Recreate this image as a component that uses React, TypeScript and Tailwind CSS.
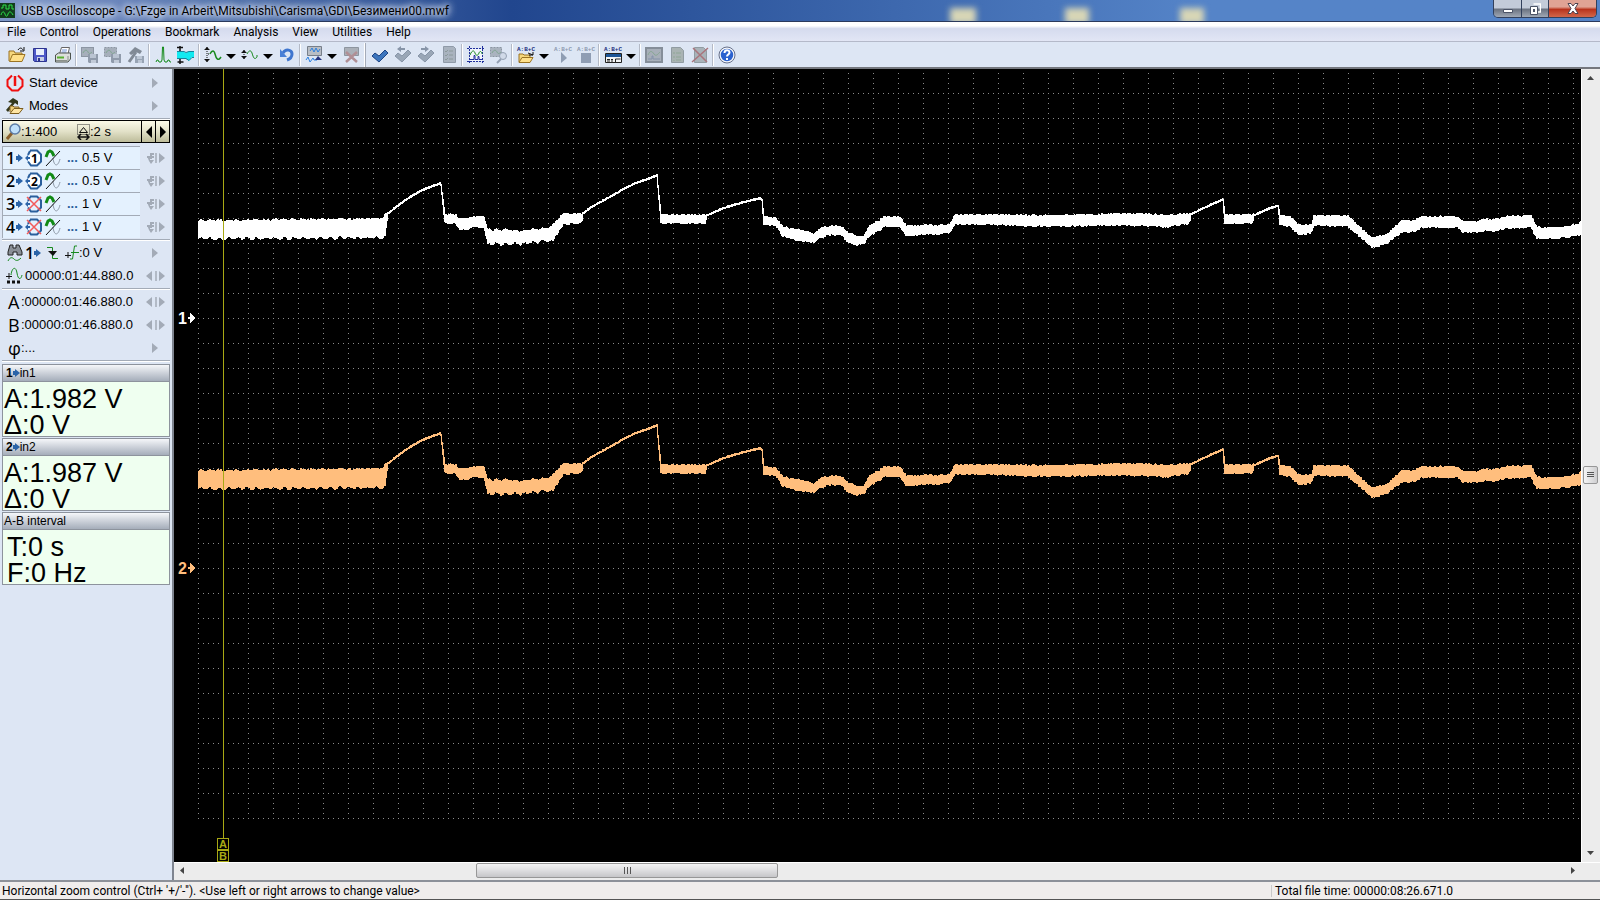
import type { ReactNode } from "react";

// Wave envelope: x, top, bottom (window coordinates)
const envelope: [number, number, number][] = [
  [198, 221, 236], [383, 219, 235], [385, 214, 233], [388, 212, 213], [392, 209, 210],
  [397, 205, 206], [405, 199, 200], [413, 194, 195], [420, 190, 191], [427, 187, 188],
  [440, 182, 183], [441, 183, 185], [445, 215, 221],
  [456, 215, 221], [459, 219, 227], [469, 219, 227], [473, 217, 225], [484, 217, 225],
  [488, 230, 241], [523, 231, 241], [550, 228, 238], [553, 225, 238], [563, 214, 222],
  [582, 214, 220], [583, 212, 213], [591, 206, 207], [600, 201, 202], [611, 195, 196],
  [623, 188, 189], [635, 182, 183], [647, 178, 179],
  [657, 174, 175], [661, 215, 221], [705, 215, 221], [707, 214, 215], [723, 207, 208],
  [743, 201, 202], [760, 197, 198], [762, 198, 200], [764, 217, 222], [776, 218, 223],
  [783, 227, 234], [798, 230, 238], [813, 234, 240], [822, 228, 235], [832, 226, 232],
  [842, 227, 233], [847, 232, 239], [856, 237, 243], [864, 236, 241], [870, 226, 233],
  [880, 220, 228], [884, 217, 224], [900, 217, 224], [906, 226, 233], [950, 225, 231],
  [955, 215, 222], [993, 215, 222], [1050, 216, 224], [1093, 215, 223], [1143, 214, 223],
  [1167, 216, 225], [1173, 215, 223], [1189, 214, 221], [1191, 213, 214], [1203, 207, 208],
  [1223, 198, 199], [1225, 215, 221], [1252, 215, 221], [1254, 214, 215], [1265, 209, 210],
  [1278, 204, 205], [1280, 216, 222], [1290, 217, 224], [1297, 224, 231], [1303, 226, 232],
  [1312, 224, 230], [1314, 216, 223], [1348, 216, 224], [1357, 225, 232], [1372, 238, 245],
  [1386, 235, 242], [1393, 229, 236], [1402, 221, 230], [1413, 221, 229], [1423, 217, 225],
  [1458, 217, 225], [1463, 222, 230], [1478, 222, 230], [1485, 219, 228], [1493, 220, 229],
  [1505, 217, 226], [1531, 216, 225], [1537, 228, 236], [1557, 228, 236], [1577, 225, 233],
  [1580, 223, 233],
];

function noise(x: number) {
  const n = Math.sin(x * 127.1) * 43758.5453;
  return n - Math.floor(n);
}

function wavePath() {
  const upper: string[] = [];
  const lower: string[] = [];
  let i = 0;
  for (let x = 198; x <= 1580; x++) {
    while (i < envelope.length - 2 && x > envelope[i + 1][0]) i++;
    const [x0, t0, b0] = envelope[i];
    const [x1, t1, b1] = envelope[i + 1];
    const k = (x - x0) / (x1 - x0);
    const top = t0 + (t1 - t0) * k;
    const bottom = b0 + (b1 - b0) * k;
    const thick = bottom - top > 3;
    const ripple = x < 384 || (x > 488 && x < 552) ? Math.sin(x * 0.68) * 1.3 : 0;
    const amp = thick ? 2.2 : 0.8;
    upper.push(`${x} ${(top + 1 - noise(x) * amp + ripple * 0.5).toFixed(1)}`);
    lower.push(`${x} ${(bottom + 1 + (thick ? noise(x + 5000) * amp : 0) + ripple).toFixed(1)}`);
  }
  return `M${upper.join("L")}L${lower.reverse().join("L")}Z`;
}

const wave = wavePath();

const menus = ["File", "Control", "Operations", "Bookmark", "Analysis", "View", "Utilities", "Help"];

function Icon({ children, size = 20 }: { children: ReactNode; size?: number }) {
  return (
    <svg width={size} height={size} viewBox={`0 0 ${size} ${size}`} fill="none" className="shrink-0">
      {children}
    </svg>
  );
}

function Folder() {
  return (
    <>
      <path d="M2 16V6h5l1 2h7v2" fill="#f6d77c" stroke="#9a7322" />
      <path d="M2.500 16.500l3-7H18l-3 7z" fill="#ffe08a" stroke="#9a7322" />
      <path d="M11 5c2-3 4-2 5 0m1-3v4h-4" stroke="#111" />
    </>
  );
}

function GreyWave({ dashed }: { dashed?: boolean }) {
  return (
    <>
      <rect x="1.500" y="2.500" width="12" height="9" fill="#a6afbb" stroke="#8c96a3" strokeDasharray={dashed ? "2 1" : undefined} />
      <path d="M3 8c2-4 4-3 5-1s2 2 4 0" stroke="#7fa690" />
      <path d="M8 9h10v9H9l-1-1z" fill="#909bab" />
      <path d="M10 9h6v4h-6z" fill="#bac4d2" />
      <path d="M11 15h5v3h-5z" fill="#c2cbd8" />
    </>
  );
}

function Check({ color, edge }: { color: string; edge: string }) {
  return <path d="M2 11l3-3 4 3 6-6 3 3-9 9z" fill={color} stroke={edge} strokeLinejoin="round" />;
}

function Formula({ color }: { color: string }) {
  return (
    <text x="1" y="6" fill={color} className="font-['Liberation_Mono',monospace] text-[6px] font-bold">
      A:B+C
    </text>
  );
}

function Updown({ x = 3, top = 3, bottom = 17 }: { x?: number; top?: number; bottom?: number }) {
  return (
    <>
      <path d={`M${x} ${top}v${bottom - top}`} stroke="#111" strokeDasharray="1 1" />
      <path d={`M${x - 3} ${top + 3}l3-3 3 3zM${x - 3} ${bottom - 3}l3 3 3-3z`} fill="#111" />
    </>
  );
}

type Tool = { label: string; icon?: ReactNode; kind?: "sep" | "grip" | "caret" };
const sep: Tool = { label: "", kind: "sep" };

const tools: Tool[] = [
  { label: "Open file", icon: <Folder /> },
  {
    label: "Save",
    icon: (
      <>
        <path d="M3.500 3.500h13v13h-12l-1-1z" fill="#4d58c8" stroke="#2c348f" />
        <path d="M6 4h8v6H6z" fill="#e8effc" />
        <path d="M7 12h7v4H7z" fill="#c8cfe4" />
        <path d="M8 13h2v3H8z" fill="#2c348f" />
      </>
    ),
  },
  {
    label: "Print",
    icon: (
      <>
        <path d="M6.500 9l2-6.500h8L15 9z" fill="#fff" stroke="#666" />
        <path d="M9 5h5M8.500 7h5" stroke="#6f92d8" />
        <path d="M2.500 10l3-2H17.500v6l-2.500 3h-12.500z" fill="#dcdfdc" stroke="#4c534c" />
        <path d="M4 12.500h7" stroke="#58b030" strokeWidth="2" />
        <path d="M3 15.500h11M15 11v5" stroke="#8b918b" />
      </>
    ),
  },
  sep,
  { label: "Save fragment", icon: <GreyWave /> },
  { label: "Save selection", icon: <GreyWave dashed /> },
  {
    label: "Tools",
    icon: (
      <>
        <path d="M3 8l6-6 7 4-2 3-4-2-5 3z" fill="#818a96" />
        <path d="M10 7L3 17" stroke="#818a96" strokeWidth="3" />
        <path d="M9 11h9v7H9z" fill="#98a4b4" />
        <path d="M11 11h5v3h-5zM12 15h4v3h-4z" fill="#bdc7d5" />
      </>
    ),
  },
  sep,
  {
    label: "Spectrum",
    icon: <path d="M3 17l1-2h1l1 2h2l1-2 .5-13h1l.5 13 1 2h2l1-2h1l1 2h1" stroke="#138a1a" />,
  },
  {
    label: "Envelope",
    icon: (
      <>
        <path d="M1 7h7l2 1 3-2h5v6h-2l-3 4-3-2H1z" fill="#12eaf0" />
        <path d="M1 6.500h7l2 1 3-1h5M1 13.500h9l3 2 3-3h2" stroke="#18839a" />
        <path d="M1 2.500h6M4 1v5M1.500 17h6M4 14v5" stroke="#111" strokeWidth="1.500" />
      </>
    ),
  },
  sep,
  {
    label: "Vertical scale",
    icon: (
      <>
        <Updown x={4} top={2} bottom={17} />
        <path d="M5 9h1" stroke="#111" />
        <path d="M7 9c2-4 4-4 5 0s3 8 6 3" stroke="#188a1e" strokeWidth="1.500" />
      </>
    ),
  },
  { label: "Vertical scale list", kind: "caret" },
  {
    label: "Vertical offset",
    icon: (
      <>
        <Updown x={4} top={5} bottom={14} />
        <path d="M7 9c2-4 4-4 5-1s2 8 5 4v-2" stroke="#188a1e" />
      </>
    ),
  },
  { label: "Vertical offset list", kind: "caret" },
  {
    label: "Undo",
    icon: (
      <>
        <path d="M6 8c3-5 9-3 9 1 0 3-2 5-5 6" stroke="#3f76cf" strokeWidth="3" />
        <path d="M3 4v8h7z" fill="#4a80d6" />
      </>
    ),
  },
  sep,
  {
    label: "Bookmark wave",
    icon: (
      <>
        <path d="M3.500 1.500h14v9h-14z" fill="#b9bec5" stroke="#777f8a" />
        <path d="M6 6l2-3 2 4 2-4 2 4 2-3" stroke="#2a7fe0" />
        <path d="M2 15l2-3 2 5 3-4 1 2h3" stroke="#2a7fe0" />
        <path d="M11 15l3-4 4 4z" fill="#27357f" />
      </>
    ),
  },
  { label: "Bookmark wave list", kind: "caret" },
  {
    label: "Delete bookmark",
    icon: (
      <>
        <path d="M3.500 2.500h14v8h-14z" fill="#aab0b8" stroke="#8d959f" />
        <path d="M5 17L16 7M5 7l11 10" stroke="#b08f95" strokeWidth="2.500" />
      </>
    ),
  },
  { label: "", kind: "grip" },
  { label: "Mark", icon: <Check color="#3c75bd" edge="#1d4484" /> },
  {
    label: "Previous mark",
    icon: (
      <>
        <Check color="#99a6b6" edge="#8795a8" />
        <path d="M4 4l4-3v2h4v2H8v2z" fill="#8795a8" />
      </>
    ),
  },
  {
    label: "Next mark",
    icon: (
      <>
        <Check color="#99a6b6" edge="#8795a8" />
        <path d="M13 4L9 1v2H5v2h4v2z" fill="#8795a8" />
      </>
    ),
  },
  {
    label: "Mark list",
    icon: (
      <>
        <path d="M4.500 1.500h10l2 2v14h-12z" fill="#a9b3bf" stroke="#8f9aa8" />
        <path d="M6 6l1 1 2-2M6 10l1 1 2-2M6 14l1 1 2-2M10 6h4M10 10h4M10 14h4" stroke="#8c9a9c" />
      </>
    ),
  },
  sep,
  {
    label: "Select fragment",
    icon: (
      <>
        <path d="M4 4h12v12H4z" fill="#f2f6fd" />
        <path d="M1 3.500h18M1 16.500h18M3.500 1v18M16.500 1v18" stroke="#1f2f9c" strokeDasharray="2 1" />
        <path d="M4 10c2-5 4-5 5-2s3 3 4 0 3-1 3 1" stroke="#188a1e" />
        <path d="M4 14.500h4v-4h1v4h3v-3h1v3h3" stroke="#1f2f9c" />
      </>
    ),
  },
  {
    label: "Zoom fragment",
    icon: (
      <>
        <rect x="1.500" y="2.500" width="11" height="9" fill="#aab3bf" stroke="#8c96a3" strokeDasharray="2 1" />
        <path d="M3 8c2-4 4-3 5-1s2 2 4 0" stroke="#7fa690" />
        <circle cx="14" cy="11" r="3.500" fill="#d1dae8" stroke="#94a0b2" />
        <path d="M12 14l-4 4" stroke="#94a0b2" strokeWidth="2" />
      </>
    ),
  },
  sep,
  {
    label: "Open script",
    icon: (
      <>
        <Formula color="#1c2f7d" />
        <path d="M3 17V9h4l1 1h6v2" fill="#f6d77c" stroke="#9a7322" />
        <path d="M3 17.500l3-5h11l-3 5z" fill="#ffe08a" stroke="#9a7322" />
        <path d="M12 8l5 2m0-3v3h-4" stroke="#111" />
      </>
    ),
  },
  { label: "Script list", kind: "caret" },
  {
    label: "Run script",
    icon: (
      <>
        <Formula color="#8d9ab0" />
        <path d="M8 7l6 6-6 5z" fill="#8f9db3" />
      </>
    ),
  },
  {
    label: "Stop script",
    icon: (
      <>
        <Formula color="#8d9ab0" />
        <path d="M5 8h10v10H5z" fill="#8f9db3" />
      </>
    ),
  },
  sep,
  {
    label: "Script panel",
    icon: (
      <>
        <Formula color="#1c2f7d" />
        <path d="M2.500 8.500h16v9h-16z" fill="#f3f5f7" stroke="#222" />
        <path d="M3 9h15v3H3z" fill="#1d5597" />
        <path d="M4 14.500h3m1 0h2M4 16h3m1 0h2M12.500 17v-3h5" stroke="#222" />
      </>
    ),
  },
  { label: "Script panel list", kind: "caret" },
  sep,
  {
    label: "Report picture",
    icon: (
      <>
        <path d="M2 3h16v14H2z" fill="#a7afb9" stroke="#858e99" strokeWidth="2" />
        <path d="M4 10c2-5 4-4 6-1s4 0 6-2" stroke="#87a793" />
        <path d="M4 14h4v-3h1v3h7" stroke="#8593ab" />
      </>
    ),
  },
  {
    label: "Report page",
    icon: (
      <>
        <path d="M4.500 2.500h9l3 3v12h-12z" fill="#a9b3b3" stroke="#919ca2" />
        <path d="M7 7v2M7 11v2M7 15v1M9 8h5M9 12h5M9 15h5" stroke="#8fa796" />
      </>
    ),
  },
  {
    label: "Delete report",
    icon: (
      <>
        <path d="M4.500 2.500h9l3 3v12h-12z" fill="#a9b3b9" stroke="#919ca2" />
        <path d="M2 17L18 3M3 3l14 14" stroke="#a9747c" strokeWidth="1.500" />
      </>
    ),
  },
  sep,
  {
    label: "Help",
    icon: (
      <>
        <circle cx="10" cy="10" r="7" fill="#2b62cf" stroke="#f5f7fb" strokeWidth="1.500" />
        <circle cx="10" cy="10" r="8" stroke="#66708a" />
        <path d="M7.500 8c0-3.500 5-3.500 5-.5 0 2-2.500 2-2.500 4" stroke="#fff" strokeWidth="2" />
        <path d="M9 13h2v2H9z" fill="#fff" />
      </>
    ),
  },
];

function Toolbar() {
  return (
    <div className="flex h-[25px] shrink-0 items-center overflow-hidden bg-[#dde6f4] pl-[5px]">
      {tools.map((tool, i) => {
        if (tool.kind === "sep")
          return <span key={i} className="mx-px h-[22px] w-[2px] shrink-0 border-r border-white bg-[#b4bac6]" />;
        if (tool.kind === "grip")
          return <span key={i} className="mx-[2px] h-[24px] w-[2px] shrink-0 border-l border-white bg-[#a4abb8]" />;
        if (tool.kind === "caret")
          return (
            <button key={i} aria-label={tool.label} className="flex w-[14px] shrink-0 justify-center pt-1">
              <svg width="10" height="6" viewBox="0 0 10 6">
                <path d="M0 0h10L5 5z" fill="#000" />
              </svg>
            </button>
          );
        return (
          <button key={i} aria-label={tool.label} className="flex w-[23px] shrink-0 justify-center">
            <Icon>{tool.icon}</Icon>
          </button>
        );
      })}
    </div>
  );
}

function RightArrow() {
  return (
    <svg width="20" height="12" viewBox="0 0 20 12" className="shrink-0">
      <path d="M7 1l6 5-6 5z" fill="#a3abb7" />
    </svg>
  );
}

function BothArrows({ trig }: { trig?: boolean }) {
  return (
    <svg width="20" height="12" viewBox="0 0 20 12" fill="none" className="shrink-0">
      {trig ? (
        <>
          <path d="M9 2H6v5M2 5h7" stroke="#a3abb7" strokeWidth="2" />
          <path d="M2 4h3v4h4l-3 4-2-3z" fill="#a3abb7" />
        </>
      ) : (
        <path d="M7 1L1 6l6 5z" fill="#a3abb7" />
      )}
      <path d="M11 1v10" stroke="#a3abb7" strokeWidth="1.500" />
      <path d="M14 1l6 5-6 5z" fill="#a3abb7" />
    </svg>
  );
}

function Divider() {
  return <div className="mx-[2px] h-[2px] shrink-0 border-b border-white bg-[#a3abb7]" />;
}

function BlueArrow() {
  return (
    <svg width="7" height="10" viewBox="0 0 7 10" className="shrink-0">
      <path d="M0 3h2V1l5 4-5 4V7H0z" fill="#2a63a8" />
    </svg>
  );
}

const channels = [
  { id: 1, on: true, scale: "0.5 V" },
  { id: 2, on: true, scale: "0.5 V" },
  { id: 3, on: false, scale: "1 V" },
  { id: 4, on: false, scale: "1 V" },
];

function ChannelRow({ id, on, scale }: { id: number; on: boolean; scale: string }) {
  return (
    <div className="flex h-[23px] items-center justify-between pl-[2px] pr-[7px]">
      <button className="flex h-[23px] w-[138px] items-center border-l border-t border-[#a3abb7] bg-[#e4f1fe] pl-[3px] text-left">
        <span className="w-[10px] font-['Open_Sans',sans-serif] text-[16px] font-semibold leading-none">{id}</span>
        <BlueArrow />
        <svg width="18" height="18" viewBox="0 0 18 18" fill="none" className="ml-[2px] shrink-0">
          <path d="M5 1.500h7l4 4v7l-4 4H6l-3-4M3 6l2-4" stroke="#2a5f9c" strokeWidth="2" fill={on ? "#fff" : "#e4f1fe"} />
          <path d="M0 9l3-3v2h2v2H3v2z" fill="#2a63a8" />
          {on ? (
            <text x="6" y="14" fill="#000" className="font-['Open_Sans',sans-serif] text-[12px] font-bold">
              {id}
            </text>
          ) : (
            <path d="M2 2l14 14M16 2L2 16" stroke="#f35b5b" strokeWidth="1.500" />
          )}
        </svg>
        <svg width="18" height="20" viewBox="0 0 18 20" fill="none" className="ml-px shrink-0">
          <path d="M2 9l2-5 2-1 2 1 2 4" stroke="#118a15" strokeWidth="3" />
          <path d="M9 10c1 9 5 9 7 1" stroke="#8d98a6" />
          <path d="M2 18L16 3" stroke="#111" />
        </svg>
        <span className="ml-[5px] w-[15px] font-bold text-[#2a5f9c]">...</span>
        <span>{scale}</span>
      </button>
      <BothArrows trig />
    </div>
  );
}

function Row({ children, both, pad = true }: { children: ReactNode; both?: boolean; pad?: boolean }) {
  return (
    <div className={`flex h-[23px] items-center justify-between pr-[7px] ${pad ? "pl-[6px]" : "pl-[8px]"}`}>
      <div className="flex items-center whitespace-nowrap">{children}</div>
      {both ? <BothArrows /> : <RightArrow />}
    </div>
  );
}

function Readout({ title, channel, text }: { title: string; channel?: number; text: string }) {
  return (
    <section className="mx-[2px] mb-px h-[73px] border border-[#8d939d] bg-[#effff0]">
      <h2 className="flex h-[17px] items-center border-b border-[#8d939d] bg-linear-to-b from-[#f5f7fa] to-[#a5adba] pl-px text-[12px] leading-none">
        {channel && (
          <>
            <b className="pl-[2px]">{channel}</b>
            <BlueArrow />
          </>
        )}
        {title}
      </h2>
      <p className={`whitespace-pre-line pt-[4px] text-[27px] leading-[26px] ${channel ? "pl-px" : "pl-[4px]"}`}>{text}</p>
    </section>
  );
}

function Sidebar() {
  return (
    <aside className="w-[174px] shrink-0 overflow-hidden border-r-2 border-[#7f8590] bg-[#dde6f4] pt-[2px] font-['Liberation_Sans',Arial,sans-serif] text-[13px]">
      <Row>
        <svg width="18" height="18" viewBox="0 0 18 18" fill="none" className="mr-[5px]">
          <path d="M6 1.500L1.500 6v6L6 16.500h6l4.500-4.500V6L12 1.500" stroke="#f01010" strokeWidth="2" />
          <path d="M9 2v10" stroke="#f01010" strokeWidth="2.500" />
        </svg>
        <button>Start device</button>
      </Row>
      <Row>
        <svg width="18" height="18" viewBox="0 0 18 18" fill="none" className="mr-[5px]">
          <path d="M2 5l5-4 5 3v4l-3-2-7 9-2-2 6-7z" fill="#33371d" />
          <path d="M4 15V9h3l1 1h5v2" fill="#f0cf7a" stroke="#7c5d1e" />
          <path d="M4 16.500l4-5h9l-4 5z" fill="#ffe5a2" stroke="#7c5d1e" />
        </svg>
        <button>Modes</button>
      </Row>
      <div className="h-px" />
      <Divider />
      <div className="mx-[2px] mb-[3px] flex h-[23px] border border-black bg-linear-to-b from-[#fbfae8] via-[#e2e1c8] to-[#bdbc9a]">
        <div className="flex flex-1 items-center pl-[3px]">
          <svg width="15" height="17" viewBox="0 0 15 17" fill="none">
            <path d="M6 10l-5 6" stroke="#8a5f2c" strokeWidth="3" />
            <circle cx="9" cy="6" r="5" fill="#bfe0fb" stroke="#5d7ca6" strokeWidth="1.500" />
          </svg>
          <span className="w-[56px]">:1:400</span>
          <svg width="13" height="17" viewBox="0 0 13 17" fill="none">
            <path d="M.5 1.500h12v10H.5z" stroke="#333" strokeDasharray="1 1" />
            <path d="M2.500 9.500h8l-4-5z" stroke="#111" />
            <path d="M1 14h11M4 11l-3 3 3 3M9 11l3 3-3 3" stroke="#111" strokeWidth="1.500" />
          </svg>
          <span>:2 s</span>
        </div>
        <button aria-label="Zoom out" className="flex w-[14px] items-center justify-center border-l border-black">
          <svg width="6" height="12" viewBox="0 0 6 12">
            <path d="M6 0v12L0 6z" />
          </svg>
        </button>
        <button aria-label="Zoom in" className="flex w-[14px] items-center justify-center border-l border-black">
          <svg width="6" height="12" viewBox="0 0 6 12">
            <path d="M0 0v12l6-6z" />
          </svg>
        </button>
      </div>
      {channels.map((channel) => (
        <ChannelRow key={channel.id} {...channel} />
      ))}
      <div className="h-px" />
      <Divider />
      <Row>
        <svg width="18" height="20" viewBox="0 0 18 20" fill="none" className="mr-px">
          <path d="M4 2h3v3h3V2h3l3 7v3h-5V9H7v3H2V9z" fill="#8a8f96" stroke="#222" />
          <path d="M2 18c2-4 4-4 6-2s4 2 7-1" stroke="#188a1e" />
        </svg>
        <span className="w-[9px] font-['Open_Sans',sans-serif] text-[16px] font-semibold leading-none">1</span>
        <BlueArrow />
        <svg width="12" height="14" viewBox="0 0 12 14" fill="none" className="ml-[6px]">
          <path d="M0 1.500h5.500v11H11" stroke="#188a1e" />
          <path d="M1 5h9l-4 5z" fill="#111" />
        </svg>
        <svg width="14" height="16" viewBox="0 0 14 16" fill="none" className="ml-[6px]">
          <path d="M3 7v6M0 10.500h6" stroke="#111" />
          <path d="M12 1H9.500L7.500 14H5M6 7.500h8" stroke="#188a1e" />
        </svg>
        :0 V
      </Row>
      <Row both>
        <svg width="18" height="18" viewBox="0 0 18 18" fill="none" className="mr-px">
          <path d="M3 6v6M0 9.500h6" stroke="#111" />
          <path d="M5 8c1-8 5-9 6-2s4 7 5 2" stroke="#188a1e" />
          <path d="M1 15h15" stroke="#111" strokeWidth="3" strokeDasharray="3 2" />
        </svg>
        00000:01:44.880.0
      </Row>
      <div className="h-px" />
      <Divider />
      <Row both pad={false}>
        <span className="w-[13px] font-['Open_Sans',sans-serif] text-[18px] leading-none">A</span>:00000:01:46.880.0
      </Row>
      <Row both pad={false}>
        <span className="w-[13px] font-['Open_Sans',sans-serif] text-[18px] leading-none">B</span>:00000:01:46.880.0
      </Row>
      <Row pad={false}>
        <span className="w-[13px] font-['Open_Sans',sans-serif] text-[18px] leading-none">φ</span>:...
      </Row>
      <div className="h-px" />
      <Divider />
      <div className="h-[2px]" />
      <Readout title="in1" channel={1} text={"A:1.982 V\nΔ:0 V"} />
      <Readout title="in2" channel={2} text={"A:1.987 V\nΔ:0 V"} />
      <Readout title="A-B interval" text={"T:0 s\nF:0 Hz"} />
    </aside>
  );
}

function Trace({ id, color, offset }: { id: number; color: string; offset: number }) {
  return (
    <g transform={`translate(0 ${offset})`} fill={color}>
      <path d={wave} stroke={color} />
      <text x="178" y="324" className="font-['Liberation_Sans',Arial,sans-serif] text-[16px] font-bold">
        {id}
      </text>
      <path d="M188 317h2v-4l5 5-5 5v-4h-2z" />
    </g>
  );
}

function Scope() {
  return (
    <svg className="min-h-0 w-full flex-1 bg-black" role="img" aria-label="Oscillogram" shapeRendering="crispEdges">
      <defs>
        <pattern id="grid" x="198" y="93" width="25" height="25" patternUnits="userSpaceOnUse">
          <path d="M0 .5h1m4 0h1m4 0h1m4 0h1m4 0h1M0 5.500h1M0 10.500h1M0 15.500h1M0 20.500h1" stroke="#8c8c8c" />
        </pattern>
      </defs>
      <g transform="translate(-174 -69)">
        <rect x="198" y="73" width="100%" height="746" fill="url(#grid)" />
        <Trace id={1} color="#ffffff" offset={0} />
        <Trace id={2} color="#ffbe7d" offset={250} />
        <path d="M223.500 69v769" stroke="#a8a814" />
        {["A", "B"].map((mark, i) => (
          <g key={mark} transform={`translate(0 ${i * 12})`}>
            <rect x="217.500" y="838.500" width="11" height="11" fill="#000" stroke="#a8a814" />
            <text x="223" y="848" textAnchor="middle" fill="#a8a814" className="font-['Liberation_Sans',Arial,sans-serif] text-[11px] font-bold">
              {mark}
            </text>
          </g>
        ))}
      </g>
    </svg>
  );
}

function VerticalScroll() {
  return (
    <div className="flex w-[19px] shrink-0 flex-col border-l border-white bg-[#ececec] pr-px">
      <button aria-label="Scroll up" className="flex h-[18px] w-full items-center justify-center">
        <svg width="7" height="4" viewBox="0 0 7 4">
          <path d="M0 4h7L3.500 0z" fill="#444" />
        </svg>
      </button>
      <div className="flex min-h-0 w-full flex-1 flex-col items-center">
        <div className="h-[50%]" />
        <div className="flex h-[18px] w-[15px] flex-col items-center justify-center gap-px rounded-xs border border-[#979797] bg-linear-to-r from-[#f5f5f5] to-[#cfcfd1]">
          <i className="h-px w-[7px] bg-[#555]" />
          <i className="h-px w-[7px] bg-[#555]" />
          <i className="h-px w-[7px] bg-[#555]" />
        </div>
      </div>
      <button aria-label="Scroll down" className="flex h-[18px] w-full items-center justify-center">
        <svg width="7" height="4" viewBox="0 0 7 4">
          <path d="M0 0h7L3.500 4z" fill="#444" />
        </svg>
      </button>
    </div>
  );
}

function HorizontalScroll() {
  return (
    <div className="flex h-[18px] shrink-0 items-center border-t border-white bg-[#ececec] pb-[2px]">
      <button aria-label="Scroll left" className="flex w-4 justify-center">
        <svg width="4" height="7" viewBox="0 0 4 7">
          <path d="M4 0v7L0 3.500z" fill="#444" />
        </svg>
      </button>
      <div className="flex flex-1">
        <div className="w-[20.8%]" />
        <div className="flex h-[15px] w-[22%] items-center justify-center gap-[2px] rounded-xs border border-[#979797] bg-linear-to-b from-[#f3f3f3] via-[#dedee0] to-[#c6c6c9]">
          <i className="h-[7px] w-px bg-[#555]" />
          <i className="h-[7px] w-px bg-[#555]" />
          <i className="h-[7px] w-px bg-[#555]" />
        </div>
      </div>
      <button aria-label="Scroll right" className="flex w-4 justify-center">
        <svg width="4" height="7" viewBox="0 0 4 7">
          <path d="M0 0v7l4-3.500z" fill="#444" />
        </svg>
      </button>
      <div className="w-[19px]" />
    </div>
  );
}

function TitleBar() {
  return (
    <header className="relative flex h-[22px] shrink-0 justify-between overflow-hidden border-b border-[#2b3a5c] bg-linear-to-r from-[#7f98c8] from-0% via-[#21468e] via-32% to-[#5584c8] to-75%">
      <i className="absolute left-[950px] top-[8px] h-4 w-[26px] bg-[#d8d6b6] blur-[3px]" />
      <i className="absolute left-[1065px] top-[8px] h-4 w-[24px] bg-[#d8d6b6] blur-[3px]" />
      <i className="absolute left-[1180px] top-[8px] h-4 w-[24px] bg-[#d8d6b6] blur-[3px]" />
      <div className="flex items-center gap-[6px]">
        <svg width="15" height="15" viewBox="0 0 15 15" fill="none">
          <path d="M0 0h15v15H0z" fill="#123c1c" />
          <path d="M1 5h2V2h3v4h3V2h3v4h2M1 12c1-4 3-4 4-1s2 3 3 0 3-3 5 1" stroke="#2ce04a" />
        </svg>
        <h1 className="whitespace-nowrap text-[12px] [text-shadow:0_0_6px_#fff,0_0_8px_#dfe8f8,0_0_10px_#dfe8f8]">
          USB Oscilloscope - G:\Fzge in Arbeit\Mitsubishi\Carisma\GDI\Безимени00.mwf
        </h1>
      </div>
      <div className="mr-[3px] flex h-[18px] overflow-hidden rounded-b-[5px] border border-t-0 border-[#32405c]">
        <button aria-label="Minimize" className="flex w-[28px] items-center justify-center border-r border-[#32405c] bg-linear-to-b from-[#c3cbd9] from-45% via-[#6c7482] via-55% to-[#a0a8b4]">
          <svg width="10" height="4" viewBox="0 0 10 4" className="mt-1">
            <path d="M.5.5h9v3h-9z" fill="#fff" stroke="#4b5366" />
          </svg>
        </button>
        <button aria-label="Restore" className="flex w-[27px] items-center justify-center border-r border-[#32405c] bg-linear-to-b from-[#c3cbd9] from-45% via-[#6c7482] via-55% to-[#a0a8b4]">
          <svg width="11" height="12" viewBox="0 0 11 12" fill="none">
            <path d="M3.500 1h7v8H8" stroke="#fff" strokeWidth="1.500" />
            <path d="M.5 3.500h7v8h-7z" fill="#fff" stroke="#4b5366" />
            <path d="M3 6h2v3H3z" fill="#4b5366" />
          </svg>
        </button>
        <button aria-label="Close" className="flex w-[47px] items-center justify-center bg-linear-to-b from-[#e0a394] from-40% via-[#b8321c] via-55% to-[#d2664a]">
          <svg width="12" height="11" viewBox="0 0 12 11">
            <path d="M1 .5h3l2 2.500 2-2.500h3L8 5.500l3 5H8L6 8l-2 2.500H1l3-5z" fill="#fff" stroke="#4b4350" />
          </svg>
        </button>
      </div>
    </header>
  );
}

export default function App() {
  return (
    <div className="flex h-screen flex-col overflow-hidden bg-[#dde6f4] font-[Roboto,'Noto_Sans',sans-serif] text-[12px] text-black">
      <TitleBar />
      <nav className="flex h-5 shrink-0 items-center border-b border-[#b4b9c9] bg-linear-to-b from-white from-20% via-[#d5dbee] via-35% to-[#e2e6f5]">
        {menus.map((menu) => (
          <button key={menu} className="px-[7px]">
            {menu}
          </button>
        ))}
      </nav>
      <Toolbar />
      <main className="flex min-h-0 flex-1 border-t-2 border-[#74777d]">
        <Sidebar />
        <div className="flex min-w-0 flex-1 flex-col">
          <div className="flex min-h-0 flex-1">
            <div className="flex min-w-0 flex-1 flex-col">
              <Scope />
            </div>
            <VerticalScroll />
          </div>
          <HorizontalScroll />
        </div>
      </main>
      <footer className="flex h-5 shrink-0 items-center border-b border-t-2 border-b-[#555] border-t-[#8d9199] bg-[#f0edec] pt-px leading-none">
        <span className="flex-1 pl-[2px]">Horizontal zoom control (Ctrl+ '+/'-''). &lt;Use left or right arrows to change value&gt;</span>
        <span className="w-[329px] border-l border-[#c9c9c9] pl-[3px]">Total file time: 00000:08:26.671.0</span>
      </footer>
    </div>
  );
}
